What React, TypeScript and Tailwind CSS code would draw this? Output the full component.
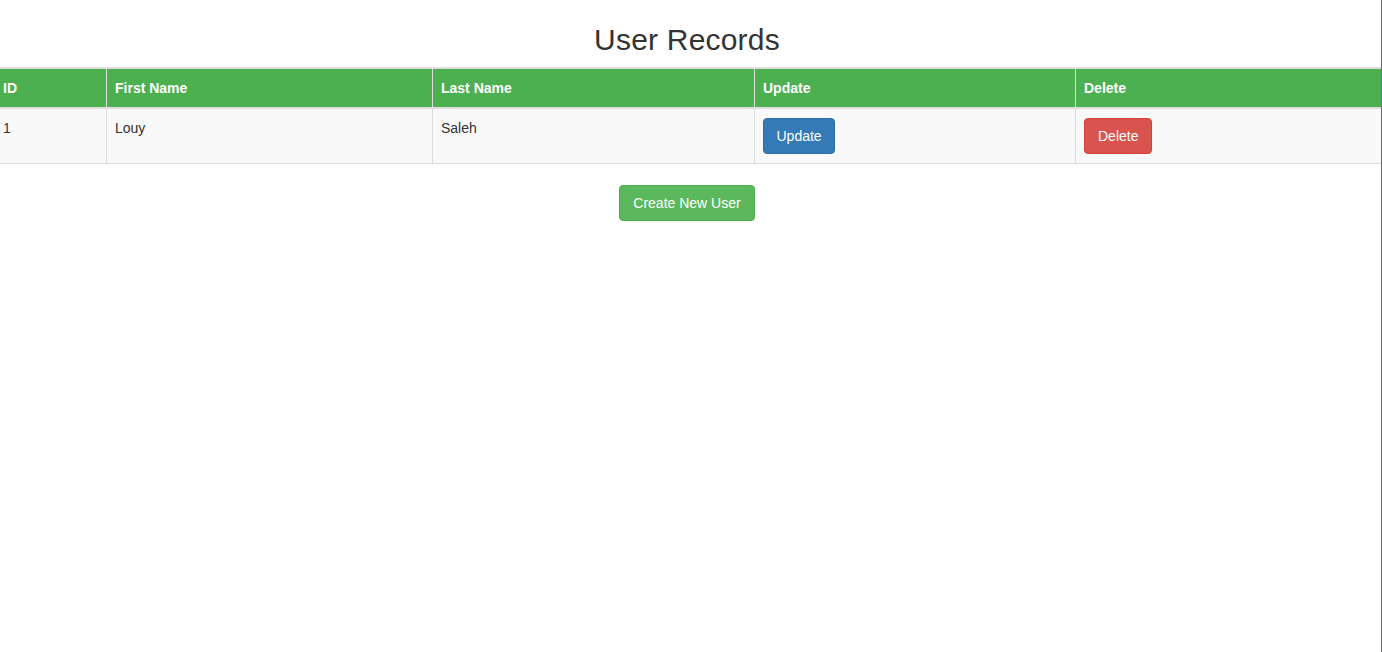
export default function App() {
  const users = [{ id: 1, firstName: "Louy", lastName: "Saleh" }];

  return (
    <div
      className="min-h-screen w-[1382px] overflow-hidden border-r border-[#6b6b6b] bg-white text-[14px] leading-[20px] text-[#333]"
      style={{ fontFamily: '"Liberation Sans", Arial, Helvetica, sans-serif' }}
    >
      <div className="w-[1374px]">
        <h2 className="mt-[23px] mb-[11px] text-center text-[30px] leading-[33px] font-normal tracking-[0.2px]">
          User Records
        </h2>
      </div>

      <table className="ml-[-6px] w-[1387px] table-fixed border-collapse">
        <colgroup>
          <col className="w-[112px]" />
          <col className="w-[326px]" />
          <col className="w-[322px]" />
          <col className="w-[321px]" />
          <col className="w-[306px]" />
        </colgroup>
        <thead>
          <tr className="bg-[#4caf50] text-left text-white">
            <th className="border border-t-2 border-b-2 border-[#ddd] px-2 py-[9px] font-bold">ID</th>
            <th className="border border-t-2 border-b-2 border-[#ddd] px-2 py-[9px] font-bold">First Name</th>
            <th className="border border-t-2 border-b-2 border-[#ddd] px-2 py-[9px] font-bold">Last Name</th>
            <th className="border border-t-2 border-b-2 border-[#ddd] px-2 py-[9px] font-bold">Update</th>
            <th className="border border-t-2 border-b-2 border-[#ddd] px-2 py-[9px] font-bold">Delete</th>
          </tr>
        </thead>
        <tbody>
          {users.map((u) => (
            <tr key={u.id} className="bg-[#f9f9f9] align-top">
              <td className="border border-[#ddd] px-2 py-[9px]">{u.id}</td>
              <td className="border border-[#ddd] px-2 py-[9px]">{u.firstName}</td>
              <td className="border border-[#ddd] px-2 py-[9px]">{u.lastName}</td>
              <td className="border border-[#ddd] px-2 py-[9px]">
                <button className="rounded-[4px] border border-[#2e6da4] bg-[#337ab7] px-[12.5px] py-[7px] text-white">
                  Update
                </button>
              </td>
              <td className="border border-[#ddd] px-2 py-[9px]">
                <button className="rounded-[4px] border border-[#d43f3a] bg-[#d9534f] px-[13px] py-[7px] text-white">
                  Delete
                </button>
              </td>
            </tr>
          ))}
        </tbody>
      </table>

      <div className="mt-[21px] flex w-[1374px] justify-center">
        <button className="rounded-[4px] border border-[#4cae4c] bg-[#5cb85c] px-[13.5px] py-[7px] text-white">
          Create New User
        </button>
      </div>
    </div>
  );
}
